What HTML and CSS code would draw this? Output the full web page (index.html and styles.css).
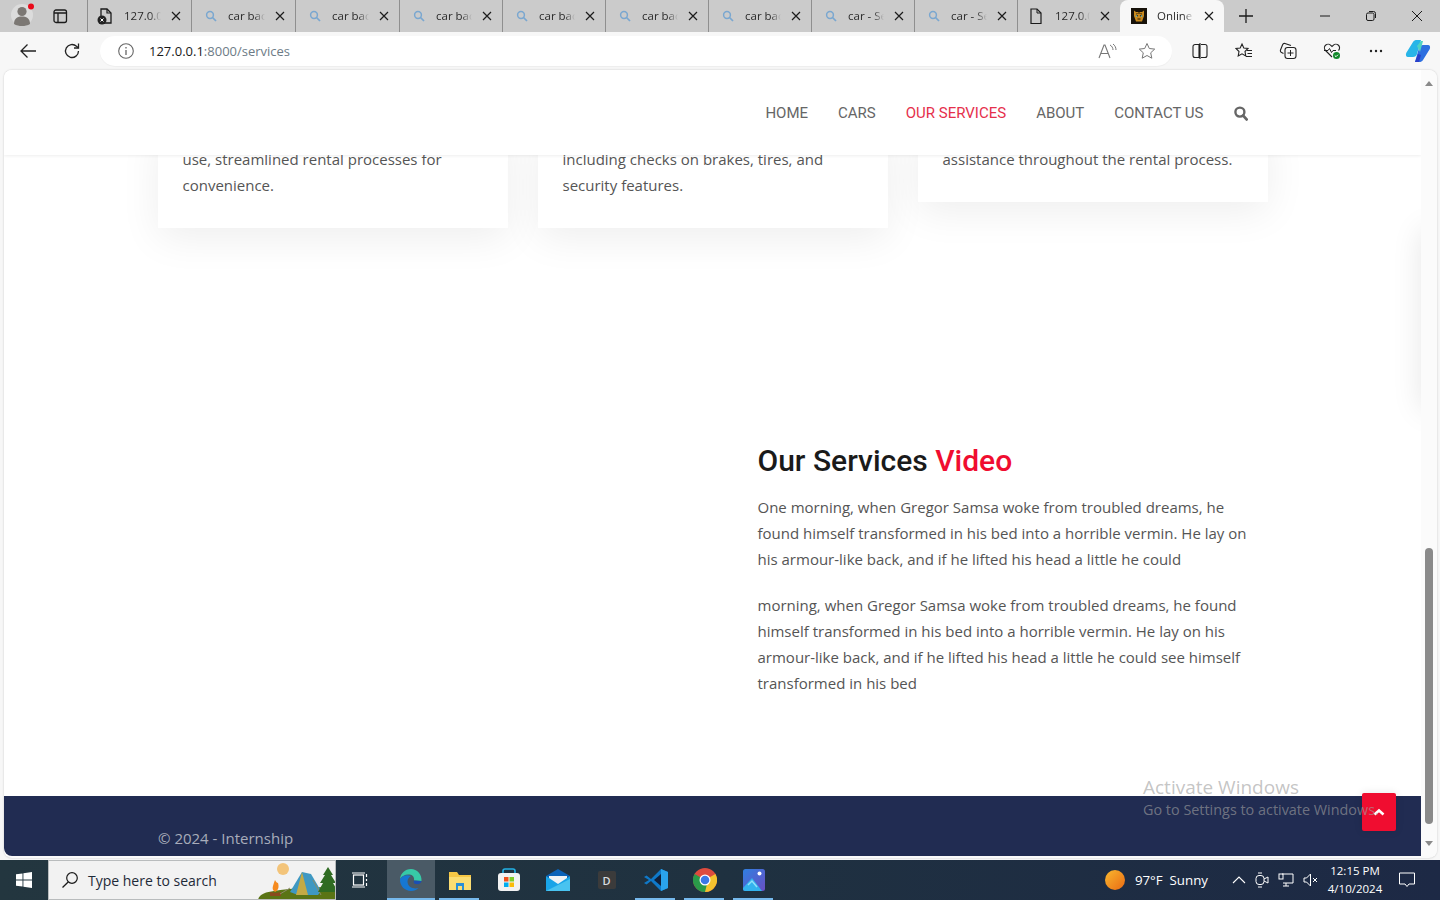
FILE: index.html
```html
<!DOCTYPE html>
<html lang="en">
<head>
<meta charset="utf-8">
<title>Online Car Rental - Services</title>
<link rel="stylesheet" href="styles.css">
</head>
<body>
<div class="window">
  <svg class="defs" width="0" height="0">
    <defs>
      <symbol id="mag" viewBox="0 0 12 12"><circle cx="5" cy="5" r="3.4" fill="none" stroke="#7aa7d0" stroke-width="1.5"/><path d="M7.5 7.5 11 11" stroke="#7aa7d0" stroke-width="1.7"/></symbol>
      <symbol id="x" viewBox="0 0 10 10"><path d="M1 1l8 8M9 1l-8 8" stroke="#1c1c1c" stroke-width="1.2"/></symbol>
    </defs>
  </svg>

  <div class="tabstrip">
    <div class="profile">
      <svg width="32" height="32" viewBox="0 0 32 32"><circle cx="16" cy="16" r="11" fill="#dcdcdc"/><circle cx="16" cy="12.5" r="4.6" fill="#7c7874"/><path d="M8 25c0-6 4-7.5 8-7.5s8 1.5 8 7.5c-2.4 1.5-5 2-8 2s-5.600-.5-8-2z" fill="#7c7874"/><circle cx="25" cy="7.500" r="3" fill="#ea0a1a"/></svg>
    </div>
    <div class="vtabs">
      <svg width="16" height="16" viewBox="0 0 16 16"><rect x="2" y="2" width="12.500" height="12.500" rx="2" fill="none" stroke="#1b1b1b" stroke-width="1.300"/><path d="M2 5h12.500M6 5v9.500" stroke="#1b1b1b" stroke-width="1.300"/></svg>
    </div>
    <div class="tabs">
      <div class="tab">
        <svg class="tab-ico" width="16" height="18" viewBox="0 0 16 18"><path d="M4 2h6l4 4v10H4z" fill="none" stroke="#1b1b1b" stroke-width="1.300"/><path d="M10 2v4h4" fill="none" stroke="#1b1b1b" stroke-width="1.200"/><circle cx="5" cy="13" r="4.500" fill="#222"/><path d="M3.500 11.500l3 3M6.500 11.500l-3 3" stroke="#fff"/></svg>
        <span class="tab-label">127.0.0.1:8000</span><svg class="tab-x" width="10" height="10"><use href="#x"/></svg>
      </div>
      <div class="tab"><svg class="tab-ico" width="12" height="12"><use href="#mag"/></svg><span class="tab-label">car back</span><svg class="tab-x" width="10" height="10"><use href="#x"/></svg></div>
      <div class="tab"><svg class="tab-ico" width="12" height="12"><use href="#mag"/></svg><span class="tab-label">car back</span><svg class="tab-x" width="10" height="10"><use href="#x"/></svg></div>
      <div class="tab"><svg class="tab-ico" width="12" height="12"><use href="#mag"/></svg><span class="tab-label">car back</span><svg class="tab-x" width="10" height="10"><use href="#x"/></svg></div>
      <div class="tab"><svg class="tab-ico" width="12" height="12"><use href="#mag"/></svg><span class="tab-label">car back</span><svg class="tab-x" width="10" height="10"><use href="#x"/></svg></div>
      <div class="tab"><svg class="tab-ico" width="12" height="12"><use href="#mag"/></svg><span class="tab-label">car back</span><svg class="tab-x" width="10" height="10"><use href="#x"/></svg></div>
      <div class="tab"><svg class="tab-ico" width="12" height="12"><use href="#mag"/></svg><span class="tab-label">car back</span><svg class="tab-x" width="10" height="10"><use href="#x"/></svg></div>
      <div class="tab"><svg class="tab-ico" width="12" height="12"><use href="#mag"/></svg><span class="tab-label">car - Search</span><svg class="tab-x" width="10" height="10"><use href="#x"/></svg></div>
      <div class="tab"><svg class="tab-ico" width="12" height="12"><use href="#mag"/></svg><span class="tab-label">car - Search</span><svg class="tab-x" width="10" height="10"><use href="#x"/></svg></div>
      <div class="tab">
        <svg class="tab-ico" width="14" height="18" viewBox="0 0 14 18"><path d="M2 2h6l4 4v10.500H2z" fill="none" stroke="#1b1b1b" stroke-width="1.200"/><path d="M8 2v4h4" fill="none" stroke="#1b1b1b"/></svg>
        <span class="tab-label">127.0.0.1:8000</span><svg class="tab-x" width="10" height="10"><use href="#x"/></svg>
      </div>
      <div class="tab tab-active">
        <svg class="tab-ico" width="16" height="16" viewBox="0 0 16 16"><rect width="16" height="16" fill="#17120a"/><path d="M3 2.500l2 1.500h6l2-1.500V8l-2 5.500H5L3 8z" fill="#c98a1e"/><path d="M5 7l2 1M11 7l-2 1M6.500 11h3" stroke="#2a1a05" stroke-width="1.200"/><path d="M8 4v2M5.500 5l1 1M10.500 5l-1 1" stroke="#2a1a05"/><circle cx="5.500" cy="8" r=".8" fill="#5fc7d8"/><circle cx="10.500" cy="8" r=".8" fill="#5fc7d8"/></svg>
        <span class="tab-label">Online Car Rental</span><svg class="tab-x" width="10" height="10"><use href="#x"/></svg>
      </div>
    </div>
    <div class="newtab"><svg width="16" height="16" viewBox="0 0 16 16"><path d="M8 1v14M1 8h14" stroke="#1b1b1b" stroke-width="1.300"/></svg></div>
    <div class="caption">
      <div class="cap-btn"><svg width="12" height="12" viewBox="0 0 12 12"><path d="M1 6h10" stroke="#1b1b1b"/></svg></div>
      <div class="cap-btn"><svg width="12" height="12" viewBox="0 0 12 12"><rect x="1.500" y="3" width="7.500" height="7.500" rx="1.500" fill="none" stroke="#1b1b1b"/><path d="M4 1.500h4.500a2 2 0 0 1 2 2V8" fill="none" stroke="#1b1b1b"/></svg></div>
      <div class="cap-btn"><svg width="12" height="12" viewBox="0 0 12 12"><path d="M1 1l10 10M11 1 1 11" stroke="#1b1b1b"/></svg></div>
    </div>
  </div>

  <div class="toolbar">
    <div class="nav-btn"><svg width="18" height="16" viewBox="0 0 18 16"><path d="M17 8H2M8.500 1.500 2 8l6.500 6.500" fill="none" stroke="#222" stroke-width="1.300"/></svg></div>
    <div class="nav-btn"><svg width="18" height="18" viewBox="0 0 18 18"><path d="M15.500 9a6.500 6.500 0 1 1-2-4.700L15.500 6" fill="none" stroke="#222" stroke-width="1.300"/><path d="M15.500 1.500V6H11" fill="none" stroke="#222" stroke-width="1.300"/></svg></div>
    <div class="address">
      <svg class="info" width="16" height="16" viewBox="0 0 16 16"><circle cx="8" cy="8" r="7.300" fill="none" stroke="#666" stroke-width="1.100"/><path d="M8 7v5M8 4v1.500" stroke="#666" stroke-width="1.300"/></svg>
      <span class="url"><span class="url-host">127.0.0.1</span>:8000/services</span>
      <svg class="read" width="20" height="16" viewBox="0 0 20 16"><path d="M1 15 6 2h1l5 13M3 10.500h7" fill="none" stroke="#777" stroke-width="1.100"/><path d="M12 2c2 1 3 3 3 5M15 1c2 1.500 3 3.500 3 6" fill="none" stroke="#777"/></svg>
      <svg width="18" height="18" viewBox="0 0 18 18"><path d="M9 1.500l2.300 5 5.400.6-4 3.700 1.100 5.400L9 13.500l-4.800 2.700 1.100-5.400-4-3.700 5.400-.6z" fill="none" stroke="#777" stroke-width="1"/></svg>
    </div>
    <div class="tools">
      <div class="tool"><svg width="16" height="16" viewBox="0 0 16 16"><path d="M7 1.500H3a2 2 0 0 0-2 2v9a2 2 0 0 0 2 2h4zM9 1.500h4a2 2 0 0 1 2 2v9a2 2 0 0 1-2 2H9M8 0v16" fill="none" stroke="#222" stroke-width="1.100"/></svg></div>
      <div class="tool"><svg width="18" height="18" viewBox="0 0 18 18"><path d="M7 2l1.800 4 4.200.5-3 3 .8 4.500L7 11.800 3.200 14l.8-4.500-3-3L5.200 6z" fill="none" stroke="#222" stroke-width="1.100"/><path d="M12 8.500h5M12.500 11.500h4.500M11 14.500h6" stroke="#222"/></svg></div>
      <div class="tool"><svg width="18" height="18" viewBox="0 0 18 18"><rect x="6" y="5.500" width="11" height="11" rx="2.500" fill="none" stroke="#222" stroke-width="1.100"/><path d="M11.500 8v6M8.500 11h6" stroke="#222"/><path d="M12 3.500 6 1.500a2 2 0 0 0-2.400 1.200L1.500 8c-.4 1 .1 2.100 1.100 2.500L4.500 11.500" fill="none" stroke="#222" stroke-width="1.100"/></svg></div>
      <div class="tool"><svg width="18" height="18" viewBox="0 0 18 18"><path d="M9 15 2.500 8.500a3.700 3.700 0 0 1 5.300-5.200L9 4.500l1.200-1.200a3.700 3.700 0 0 1 5.300 5.200" fill="none" stroke="#222" stroke-width="1.100"/><path d="M1 8.500h4l1.500-2 2 4 1.500-2h3" fill="none" stroke="#222"/><circle cx="13.500" cy="13.500" r="3.500" fill="#128a2c"/><path d="M11.800 13.500l1.200 1.200 2-2" fill="none" stroke="#fff"/></svg></div>
      <div class="tool"><svg width="14" height="4" viewBox="0 0 14 4"><circle cx="2" cy="2" r="1.200" fill="#222"/><circle cx="7" cy="2" r="1.200" fill="#222"/><circle cx="12" cy="2" r="1.200" fill="#222"/></svg></div>
      <div class="tool copilot"><svg width="26" height="24" viewBox="0 0 26 24"><path d="M8 3c1-1.500 2-2 4-2h4l-4 14c-.5 2-2 3-4 3H3C1 18 .5 16 1.200 14z" fill="#28b5e8"/><path d="M18 21c-1 1.500-2 2-4 2h-4l4-14c.5-2 2-3 4-3h5c2 0 2.500 2 1.800 4z" fill="#2d6fe0"/><path d="M12 7l4-5h2l-3 11z" fill="#4fd2c2"/><path d="M10 23l3-8 3 1-2 7z" fill="#2a3fc9"/></svg></div>
    </div>
  </div>

  <div class="viewport-frame">
    <div class="page">
      <header class="site-header">
        <nav class="site-nav">
          <a class="nav-link">HOME</a>
          <a class="nav-link">CARS</a>
          <a class="nav-link nav-link-active">OUR SERVICES</a>
          <a class="nav-link">ABOUT</a>
          <a class="nav-link">CONTACT US</a>
          <svg class="nav-search" width="14" height="15" viewBox="0 0 14 15"><circle cx="5.900" cy="6.100" r="4.500" fill="none" stroke="#666" stroke-width="2.400"/><path d="M9.200 9.600l3.400 3.800" stroke="#666" stroke-width="2.800" stroke-linecap="round"/></svg>
        </nav>
      </header>

      <section class="cards">
        <article class="card"><p>use, streamlined rental processes for convenience.</p></article>
        <article class="card"><p>including checks on brakes, tires, and security features.</p></article>
        <article class="card"><p>assistance throughout the rental process.</p></article>
      </section>

      <section class="video">
        <div class="video-copy">
          <h2 class="video-title">Our Services <span class="accent">Video</span></h2>
          <p>One morning, when Gregor Samsa woke from troubled dreams, he found himself transformed in his bed into a horrible vermin. He lay on his armour-like back, and if he lifted his head a little he could</p>
          <p>morning, when Gregor Samsa woke from troubled dreams, he found himself transformed in his bed into a horrible vermin. He lay on his armour-like back, and if he lifted his head a little he could see himself transformed in his bed</p>
        </div>
      </section>

      <footer class="site-footer"><p class="copyright">© 2024 - Internship</p></footer>

      <div class="edge-shadow"></div>
      <a class="to-top"><svg width="12" height="8" viewBox="0 0 12 8"><path d="M1.500 6.500 6 2.500l4.500 4" fill="none" stroke="#fff" stroke-width="2.600"/></svg></a>
    </div>
    <div class="scrollbar">
      <div class="arrow-up"></div>
      <div class="thumb"></div>
      <div class="arrow-down"></div>
    </div>
  </div>

  <div class="taskbar">
    <div class="start"><svg width="16" height="16" viewBox="0 0 16 16"><path d="M0 2.300 6.500 1.400v6.200H0zM7.400 1.300 16 0v7.600H7.400zM0 8.400h6.500v6.200L0 13.700zM7.400 8.400H16V16l-8.600-1.300z" fill="#fff"/></svg></div>
    <div class="search">
      <svg width="18" height="18" viewBox="0 0 18 18"><circle cx="11" cy="7" r="5.300" fill="none" stroke="#1b1b1b" stroke-width="1.200"/><path d="M7.200 11 1.500 16.500" stroke="#1b1b1b" stroke-width="1.300"/></svg>
      <span class="search-text">Type here to search</span>
      <svg class="search-art" width="80" height="40" viewBox="0 0 80 40">
        <circle cx="27" cy="9" r="6" fill="#f3c47a"/>
        <path d="M2 40c1-6 8-8 16-9 16-3 40-4 62-4v13z" fill="#5a7415"/>
        <path d="M19 32c-4-3-2-6 0-12 1 2 2 3 3 3 1 3 1 7-3 9z" fill="#f58a1f"/>
        <path d="M14 35l11-2M14 33l11 2" stroke="#8a4a1e" stroke-width="2"/>
        <path d="M46 12 34 32l8 3h20l3-4-10-17z" fill="#3f98c2"/>
        <path d="M46 12l-6 23h12z" fill="#c4aa45"/>
        <path d="M34 28l-10 6M57 20l8 15" stroke="#8b8b6a"/>
        <path d="M72 7l-5 8 2 0-5 8 3 0-5 9h20l-5-9 3 0-5-8 2 0z" fill="#2f6b22"/>
      </svg>
    </div>
    <div class="tb-item tb-taskview"><svg width="16" height="16" viewBox="0 0 16 16"><rect x="1.500" y="3" width="10" height="10" fill="none" stroke="#fff" stroke-width="1.200"/><path d="M0 1h13M0 15h13M14.500 2v3M14.500 7v2M14.500 11v3" stroke="#fff" stroke-width="1.200"/></svg></div>
    <div class="tb-item tb-active"><svg width="24" height="24" viewBox="0 0 24 24"><path d="M22.500 13C23 6 18 1 12 1 6 1 1.500 5.500 1 11c2-3.500 6-5 9.500-4.500 4 .5 5 3.500 4.500 6z" fill="#37c9a7"/><path d="M1 11c-.5 7 5 12 11 12 3 0 5.500-1 7.500-3-5 1.500-11-1-11-6.500C8.500 11 10 9 12 8 7.500 6 3 8 1 11z" fill="#1677d2"/><path d="M22.500 13c0 2.500-3 3.500-6 3-2-.5-2-2-1.500-3.500z" fill="#1a4fb5"/></svg></div>
    <div class="tb-item tb-running"><svg width="24" height="22" viewBox="0 0 24 22"><path d="M1 3h8l2 3h12v15H1z" fill="#f6c745"/><path d="M1 8h22v13H1z" fill="#fbdd72"/><rect x="8" y="14" width="8" height="7" fill="#2a8fd6"/><path d="M10 17h4v4h-4z" fill="#fbdd72"/></svg></div>
    <div class="tb-item"><svg width="24" height="24" viewBox="0 0 24 24"><path d="M6 6V3a2 2 0 0 1 2-2h8a2 2 0 0 1 2 2v3" fill="none" stroke="#22b2e6" stroke-width="1.600"/><rect x="1" y="5" width="22" height="18" rx="3" fill="#f2f2f2"/><rect x="7" y="9" width="4.500" height="4.500" fill="#f1511b"/><rect x="12.500" y="9" width="4.500" height="4.500" fill="#80cc28"/><rect x="7" y="14.500" width="4.500" height="4.500" fill="#00adef"/><rect x="12.500" y="14.500" width="4.500" height="4.500" fill="#fbbc09"/></svg></div>
    <div class="tb-item"><svg width="24" height="24" viewBox="0 0 24 24"><path d="M0 8 12 1l12 7-12 8z" fill="#0a62b8"/><path d="M3 8h18v6l-9 4-9-4z" fill="#eef2f5"/><path d="M0 8l12 8 12-8v15H0z" fill="#19a4e8"/><path d="M0 23 24 11v12z" fill="#49c3f0"/></svg></div>
    <div class="tb-item"><div class="dbox">D</div></div>
    <div class="tb-item tb-running"><svg width="24" height="24" viewBox="0 0 24 24"><path d="M17 1 7 11 2.500 7.500 0 9l5 3-5 3 2.500 1.500L7 13l10 10 7-3V4z" fill="#0f79c9"/><path d="M17 6v12l-7-6z" fill="#10203a"/><path d="M17 1l7 3v16l-7 3z" fill="#2aa3ec"/></svg></div>
    <div class="tb-item tb-running"><svg width="24" height="24" viewBox="0 0 24 24"><circle cx="12" cy="12" r="12" fill="#dd4b3e"/><path d="M12 12 22.400 6A12 12 0 0 1 12 24z" fill="#f5c22e"/><path d="M12 24A12 12 0 0 1 1.600 6L12 12l2 4z" fill="#2a9a49"/><circle cx="12" cy="12" r="5.500" fill="#fff"/><circle cx="12" cy="12" r="4.300" fill="#3b78e7"/></svg></div>
    <div class="tb-item tb-running"><svg width="24" height="24" viewBox="0 0 24 24"><defs><linearGradient id="ph" x1="0" y1="0" x2="1" y2="1"><stop offset="0" stop-color="#2f7fe0"/><stop offset="1" stop-color="#6a4fc4"/></linearGradient></defs><rect x="1" y="1" width="22" height="22" rx="2.500" fill="url(#ph)"/><path d="M1 20 10 10l10 13H3a2 2 0 0 1-2-2z" fill="#33b3ee"/><path d="M6 17l4-4 5 6" fill="none" stroke="#8fe0fa" stroke-width="1.500"/><circle cx="17.500" cy="5.500" r="2" fill="#fff"/></svg></div>
    <div class="tray">
      <div class="weather"><span class="sun"></span><span class="tray-text">97°F&nbsp;&nbsp;Sunny</span></div>
      <div class="tray-icons">
        <svg width="14" height="8" viewBox="0 0 14 8"><path d="M1 7l6-6 6 6" fill="none" stroke="#fff" stroke-width="1.100"/></svg>
        <svg width="14" height="16" viewBox="0 0 14 16"><rect x="1" y="3.500" width="8" height="9" rx="3" fill="none" stroke="#fff"/><path d="M9 7l4-2v6l-4-2" fill="none" stroke="#fff"/><path d="M3 1h4M3 15h4" stroke="#fff"/></svg>
        <svg width="16" height="14" viewBox="0 0 16 14"><path d="M4 1h11v9H5" fill="none" stroke="#fff"/><rect x="1" y="1" width="4" height="5" fill="none" stroke="#fff"/><path d="M8 10v3M5 13h6" stroke="#fff"/></svg>
        <svg width="15" height="14" viewBox="0 0 15 14"><path d="M1 5h2.500L7.500 1v12l-4-4H1z" fill="none" stroke="#fff"/><path d="M10 5l4 4M14 5l-4 4" stroke="#fff"/></svg>
      </div>
      <div class="clock"><span>12:15 PM</span><span>4/10/2024</span></div>
      <div class="notify"><svg width="16" height="16" viewBox="0 0 16 16"><path d="M.500 1h15v11H10l-2 2.500L6 12H.500z" fill="none" stroke="#fff"/></svg></div>
    </div>
  </div>

  <div class="activation">
    <div class="activation-title">Activate Windows</div>
    <div class="activation-sub">Go to Settings to activate Windows.</div>
  </div>
</div>
</body>
</html>
```

FILE: styles.css
```css
* { box-sizing: border-box; }
html, body { margin: 0; padding: 0; height: 100%; overflow: hidden; }
body { font-family: "Open Sans", "Noto Sans", sans-serif; color: #1b1b1b; }
p { margin: 0; }
a { text-decoration: none; }

.defs { position: absolute; }
.window { position: relative; width: 1440px; height: 900px; display: flex; flex-direction: column; background: #f7f7f7; overflow: hidden; }

/* Browser tab strip */
.tabstrip { height: 32px; flex: none; display: flex; background: #cbcbcb; }
.profile { width: 44px; display: flex; align-items: center; justify-content: center; }
.profile svg { margin-left: -1px; margin-top: -2px; }
.vtabs { width: 43px; display: flex; align-items: center; justify-content: center; padding-right: 12px; }
.tabs { display: flex; height: 32px; }
.tab { position: relative; width: 103px; height: 32px; display: flex; align-items: center; padding: 0 10px 0 0; border-left: 1px solid #8f8f8f; }
.tab:nth-child(-n+3) { width: 104px; }
.tab-ico { flex: none; margin-left: 13px; margin-right: 11px; }
.tab:first-child .tab-ico { margin-left: 9px; margin-right: 11px; }
.tab:nth-child(10) .tab-ico { margin-left: 11px; margin-right: 12px; }
.tab-label { flex: 1; min-width: 0; margin-top: -1px; white-space: nowrap; overflow: hidden; font-size: 11.500px; color: #2a2a2a; -webkit-mask-image: linear-gradient(90deg, #000 70%, transparent 100%); mask-image: linear-gradient(90deg, #000 70%, transparent 100%); }
.tab-x { flex: none; margin-left: 10px; }
.tab-active { width: 104px; background: #f7f7f7; border-left: 0; border-radius: 8px 8px 0 0; }
.tab-active .tab-ico { margin-left: 11px; margin-right: 10px; }
.newtab { width: 44px; display: flex; align-items: center; justify-content: center; }
.caption { margin-left: auto; display: flex; }
.cap-btn { width: 46px; display: flex; align-items: center; justify-content: center; }

/* Browser toolbar */
.toolbar { height: 38px; flex: none; display: flex; align-items: center; padding: 0 0 0 6px; background: #f7f7f7; }
.nav-btn { width: 44px; height: 32px; display: flex; align-items: center; justify-content: center; }
.address { width: 1072px; height: 30px; margin-left: 6px; display: flex; align-items: center; padding: 0 16px 0 18px; background: #fff; border-radius: 15px; box-shadow: 0 1px 1px rgba(0,0,0,.04); }
.info { flex: none; }
.url { margin-left: 15px; font-size: 13px; color: #6d7b86; }
.url-host { color: #1a1a1a; }
.read { margin-left: auto; margin-right: 20px; }
.tools { display: flex; margin-left: 6px; flex: 1; }
.tool { width: 44px; height: 32px; display: flex; align-items: center; justify-content: center; }
.copilot { width: 40px; }

/* Viewport */
.viewport-frame { height: 788px; flex: none; margin: 0 3px 0 4px; display: flex; background: #fafafa; border-radius: 8px; overflow: hidden; box-shadow: 0 0 2px rgba(0,0,0,.22); }
.page { position: relative; width: 1417px; flex: none; height: 786px; background: #fff; display: flex; flex-direction: column; overflow: hidden; }

.site-header { position: relative; z-index: 5; height: 85px; flex: none; background: #fff; box-shadow: 0 1px 3px rgba(0,0,0,.07); display: flex; justify-content: flex-end; padding-right: 173.500px; }
.site-nav { display: flex; align-items: center; gap: 30px; }
.nav-link { font-family: Roboto, sans-serif; font-size: 15px; color: #666; }
.nav-link-active { color: #e5304c; }
.nav-search { margin-top: 1px; }

.cards { display: flex; align-items: flex-start; gap: 30px; width: 1110px; margin: -29px auto 0; flex: none; }
.card { width: 350px; padding: 20px 25px 30px; background: #fff; box-shadow: 0 10px 40px rgba(0,0,0,.07); }
.card p { font-size: 15px; line-height: 26px; color: #555; }

.video { width: 1110px; margin: 0 auto; padding: 215px 0 100px 600px; flex: 1; }
.video-title { margin: 0 0 15px; font-family: Roboto, sans-serif; font-size: 30px; font-weight: 500; line-height: 36px; color: #1a1a1a; }
.accent { color: #f00d30; font-weight: 500; }
.video-copy p { font-size: 15px; line-height: 26px; color: #555; margin-bottom: 20px; }
.video-copy p:last-child { margin-bottom: 0; }

.site-footer { height: 60px; flex: none; background: #212c52; padding: 30px 0 0 154px; border-radius: 0 0 0 8px; }
.copyright { font-size: 15px; line-height: 24px; color: #a8acba; }

.edge-shadow { position: absolute; left: 100%; top: 160px; width: 40px; height: 180px; box-shadow: 0 0 30px rgba(0,0,0,.1); }
.to-top { position: absolute; z-index: 6; left: 1358px; top: 723px; width: 34px; height: 38px; display: flex; align-items: center; justify-content: center; background: #f00d30; border-radius: 2px; box-shadow: 0 0 8px rgba(0,0,0,.1); }

/* Scrollbar */
.scrollbar { width: 16px; flex: none; height: 786px; display: flex; flex-direction: column; align-items: center; padding: 11px 0 10px; background: #fbfbfb; }
.arrow-up { width: 0; height: 0; border: 4.500px solid transparent; border-top: 0; border-bottom: 5px solid #8a8a8a; }
.thumb { width: 8px; height: 276px; margin-top: 462px; background: #8a8a8a; border-radius: 4px; }
.arrow-down { width: 0; height: 0; margin-top: auto; border: 4.500px solid transparent; border-bottom: 0; border-top: 5px solid #8a8a8a; }

/* Taskbar */
.taskbar { margin-top: 2px; height: 40px; flex: none; display: flex; color: #fff; background: linear-gradient(90deg, #23363f 0%, #1f3140 50%, #1d2945 100%); }
.start { width: 48px; display: flex; align-items: center; justify-content: center; }
.search { width: 288px; display: flex; align-items: center; padding-left: 12px; background: #f2f2f2; border: 1px solid #b9bcbd; overflow: hidden; }
.search-text { margin-left: 9px; font-size: 14px; color: #1e2a38; }
.search-art { margin-left: auto; margin-right: -1px; flex: none; }
.tb-item { position: relative; width: 49px; display: flex; align-items: center; justify-content: center; }
.tb-taskview { width: 51px; padding-right: 3px; }
.tb-active { width: 48px; background: #4a5a66; border-bottom: 2px solid #76b9ed; padding-top: 2px; }
.tb-running::after { content: ""; position: absolute; left: 4px; right: 5px; bottom: 0; height: 2px; background: #76b9ed; }
.dbox { width: 18px; height: 18px; display: flex; align-items: center; justify-content: center; background: #3b3b3b; border-radius: 2px; font-size: 11px; font-weight: 600; color: #d8dde0; }
.tray { margin-left: auto; display: flex; align-items: center; }
.weather { display: flex; align-items: center; gap: 10px; margin-right: 24px; }
.sun { width: 20px; height: 20px; border-radius: 50%; background: linear-gradient(135deg, #f9b82f, #ea6a13); }
.tray-text { font-size: 13.300px; color: #fff; }
.tray-icons { display: flex; align-items: center; width: 86px; justify-content: space-between; }
.clock { width: 72px; margin-left: 1px; margin-top: -2px; display: flex; flex-direction: column; align-items: center; gap: 3px; font-size: 11.500px; line-height: 15px; color: #fff; white-space: nowrap; }
.notify { width: 32px; margin-right: 17px; display: flex; justify-content: center; }

/* Watermark overlay */
.activation { position: absolute; z-index: 10; left: 1143px; top: 775px; pointer-events: none; color: rgba(160,160,160,.62); white-space: nowrap; }
.activation-title { font-size: 19px; line-height: 24px; }
.activation-sub { font-size: 14.400px; line-height: 22px; }
```
